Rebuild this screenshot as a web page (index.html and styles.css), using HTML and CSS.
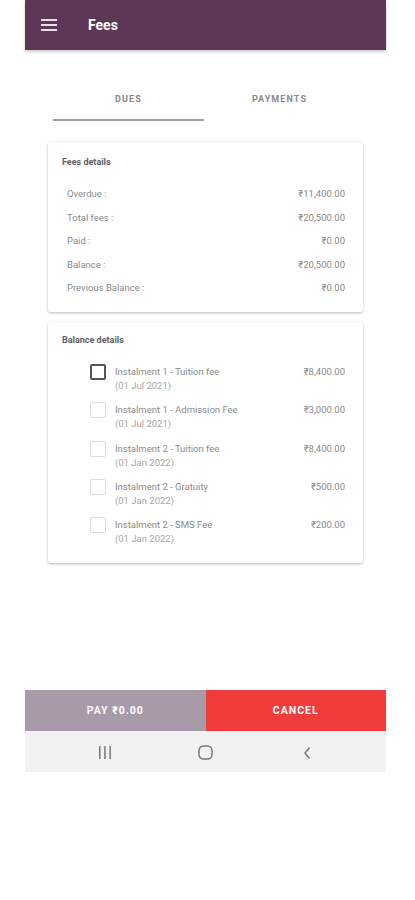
FILE: index.html
```html
<!DOCTYPE html>
<html lang="en">
  <head>
    <meta charset="UTF-8" />
    <meta name="viewport" content="width=device-width, initial-scale=1.0" />
    <title>Fees</title>
    <link rel="stylesheet" href="styles.css">
  </head>
  <body>
    <div class="phone">
      <div class="appbar">
        <svg class="menu-icon" width="16" height="12" viewBox="0 0 16 12">
          <rect x="0" y="0" width="16" height="2" fill="#e8dde6" />
          <rect x="0" y="5" width="16" height="2" fill="#e8dde6" />
          <rect x="0" y="10" width="16" height="2" fill="#e8dde6" />
        </svg>
        <h1>Fees</h1>
      </div>

      <div class="tabs">
        <div class="tab active">DUES</div>
        <div class="tab">PAYMENTS</div>
      </div>

      <div class="card fees-card">
        <h2>Fees details</h2>
        <ul class="rows">
          <li><span>Overdue :</span><span>₹11,400.00</span></li>
          <li><span>Total fees :</span><span>₹20,500.00</span></li>
          <li><span>Paid :</span><span>₹0.00</span></li>
          <li><span>Balance :</span><span>₹20,500.00</span></li>
          <li><span>Previous Balance :</span><span>₹0.00</span></li>
        </ul>
      </div>

      <div class="card balance-card">
        <h2>Balance details</h2>
        <ul class="items">
          <li>
            <span class="check focused"></span>
            <div class="item-text">
              <div>Instalment 1 - Tuition fee</div>
              <div class="date">(01 Jul 2021)</div>
            </div>
            <span class="amount">₹8,400.00</span>
          </li>
          <li>
            <span class="check"></span>
            <div class="item-text">
              <div>Instalment 1 - Admission Fee</div>
              <div class="date">(01 Jul 2021)</div>
            </div>
            <span class="amount">₹3,000.00</span>
          </li>
          <li>
            <span class="check"></span>
            <div class="item-text">
              <div>Instalment 2 - Tuition fee</div>
              <div class="date">(01 Jan 2022)</div>
            </div>
            <span class="amount">₹8,400.00</span>
          </li>
          <li>
            <span class="check"></span>
            <div class="item-text">
              <div>Instalment 2 - Gratuity</div>
              <div class="date">(01 Jan 2022)</div>
            </div>
            <span class="amount">₹500.00</span>
          </li>
          <li>
            <span class="check"></span>
            <div class="item-text">
              <div>Instalment 2 - SMS Fee</div>
              <div class="date">(01 Jan 2022)</div>
            </div>
            <span class="amount">₹200.00</span>
          </li>
        </ul>
      </div>

      <div class="spacer"></div>

      <div class="actions">
        <button class="pay">PAY ₹0.00</button>
        <button class="cancel">CANCEL</button>
      </div>

      <div class="navbar">
        <div class="nav-btn">
          <svg width="14" height="13" viewBox="0 0 14 13">
            <rect x="1" y="0" width="1.5" height="13" fill="#777" />
            <rect x="6.2" y="0" width="1.5" height="13" fill="#777" />
            <rect x="11.4" y="0" width="1.5" height="13" fill="#777" />
          </svg>
        </div>
        <div class="nav-btn">
          <svg width="15" height="15" viewBox="0 0 15 15">
            <rect x="1" y="1" width="13" height="13" rx="4.5" fill="none" stroke="#777" stroke-width="1.5" />
          </svg>
        </div>
        <div class="nav-btn">
          <svg width="10" height="14" viewBox="0 0 10 14">
            <path d="M7.5 1.5 L3 7 L7.5 12.5" fill="none" stroke="#777" stroke-width="1.5" />
          </svg>
        </div>
      </div>
    </div>
  </body>
</html>
```

FILE: styles.css
```css
* {
  margin: 0;
  padding: 0;
  box-sizing: border-box;
}

body {
  font-family: Roboto, "Liberation Sans", sans-serif;
  background-color: #fff;
}

.phone {
  width: 361px;
  height: 772px;
  margin-left: 25px;
  display: flex;
  flex-direction: column;
}

.appbar {
  height: 50px;
  background-color: #5d3756;
  display: flex;
  align-items: center;
  padding-left: 16px;
  box-shadow: 0 2px 3px rgba(0, 0, 0, 0.2);
}

.appbar h1 {
  font-size: 14px;
  font-weight: 700;
  color: #fff;
  margin-left: 31px;
}

.tabs {
  display: flex;
  margin: 28px 31px 0 28px;
}

.tab {
  flex: 1;
  height: 43px;
  padding-top: 16px;
  text-align: center;
  font-size: 9px;
  font-weight: 700;
  letter-spacing: 1.1px;
  color: #8a8a8a;
}

.tab.active {
  color: #858585;
  border-bottom: 2px solid #a39aa1;
}

.card {
  margin: 0 23px;
  background-color: #fff;
  border-radius: 3px;
  box-shadow: 0 1px 3px rgba(0, 0, 0, 0.28);
}

.card h2 {
  font-size: 9px;
  font-weight: 700;
  line-height: 12px;
  color: #606060;
}

.fees-card {
  margin-top: 21px;
  height: 170px;
  padding: 14px 18px 0 14px;
}

.rows {
  list-style-type: none;
  margin-top: 14px;
  padding-left: 5px;
}

.rows li {
  display: flex;
  justify-content: space-between;
  height: 23.5px;
  line-height: 23.5px;
  font-size: 9.5px;
  color: #8a8a8a;
}

.balance-card {
  margin-top: 10px;
  height: 241px;
  padding: 12px 18px 0 14px;
}

.items {
  list-style-type: none;
  margin-top: 14px;
  padding-left: 28px;
}

.items li {
  display: flex;
  align-items: flex-start;
  padding: 5px 0;
  height: 38.3px;
  font-size: 9.5px;
  line-height: 14px;
  color: #8a8a8a;
}

.check {
  width: 16px;
  height: 16px;
  margin-top: -1px;
  border: 1.5px solid #dcdcdc;
  border-radius: 2px;
}

.check.focused {
  border: 2px solid #555;
}

.item-text {
  flex: 1;
  margin-left: 9px;
}

.date {
  color: #a5a5a5;
}

.spacer {
  flex: 1;
}

.actions {
  display: flex;
  height: 41px;
}

.actions button {
  flex: 1;
  border: none;
  font-family: Roboto, "Liberation Sans", sans-serif;
  font-size: 10.5px;
  font-weight: 700;
  letter-spacing: 1px;
  color: #fff;
}

.pay {
  background-color: #a89aa8;
}

.cancel {
  background-color: #f23c3c;
}

.navbar {
  height: 41px;
  background-color: #f2f2f2;
  display: flex;
  align-items: center;
  justify-content: center;
}

.nav-btn {
  width: 101px;
  display: flex;
  justify-content: center;
  padding-top: 2px;
}
```
